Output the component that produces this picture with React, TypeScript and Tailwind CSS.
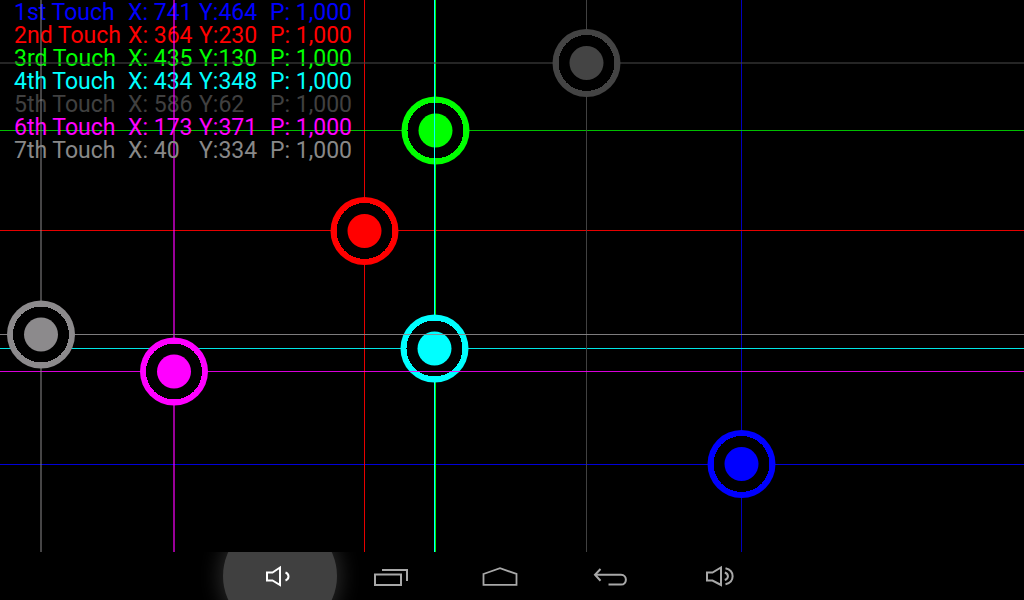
import type { ReactNode } from 'react';

interface Touch {
  label: string;
  x: number;
  y: number;
  cx: number;
  cy: number;
  textColor: string;
  color: string;
  hAlpha: number;
  vAlpha: number;
  hWidth: number;
  vWidth: number;
  layer: string;
}

const touches: Touch[] = [
  { label: '1st Touch', x: 741, y: 464, cx: 741.5, cy: 464, textColor: 'text-[#0000ff]', color: '#0000ff', hAlpha: 0.85, vAlpha: 0.75, hWidth: 1, vWidth: 1, layer: 'z-1' },
  { label: '2nd Touch', x: 364, y: 230, cx: 364.5, cy: 231, textColor: 'text-[#ff0000]', color: '#ff0000', hAlpha: 0.9, vAlpha: 0.9, hWidth: 1, vWidth: 1, layer: 'z-2' },
  { label: '3rd Touch', x: 435, y: 130, cx: 435.5, cy: 130.5, textColor: 'text-[#00ff00]', color: '#00ff00', hAlpha: 0.75, vAlpha: 0.95, hWidth: 1, vWidth: 1, layer: 'z-3' },
  { label: '4th Touch', x: 434, y: 348, cx: 434.5, cy: 348.5, textColor: 'text-[#00ffff]', color: '#00ffff', hAlpha: 0.9, vAlpha: 1, hWidth: 1, vWidth: 1, layer: 'z-4' },
  { label: '5th Touch', x: 586, y: 62, cx: 586.5, cy: 63, textColor: 'text-[#404040]', color: '#444444', hAlpha: 0.55, vAlpha: 0.95, hWidth: 2, vWidth: 1, layer: 'z-5' },
  { label: '6th Touch', x: 173, y: 371, cx: 174, cy: 371.5, textColor: 'text-[#ff00ff]', color: '#ff00ff', hAlpha: 0.85, vAlpha: 0.6, hWidth: 1, vWidth: 2, layer: 'z-6' },
  { label: '7th Touch', x: 40, y: 334, cx: 41, cy: 334.5, textColor: 'text-[#888888]', color: '#8c8a8c', hAlpha: 0.9, vAlpha: 0.5, hWidth: 1, vWidth: 2, layer: 'z-7' },
];

function TouchRow({ touch }: { touch: Touch }) {
  return (
    <tr className={`relative ${touch.layer} ${touch.textColor}`}>
      <td className="w-[114px] p-0">{touch.label}</td>
      <td className="w-[71px] p-0">X: {touch.x}</td>
      <td className="w-[71px] p-0">Y:{touch.y}</td>
      <td className="p-0">P: 1,000</td>
    </tr>
  );
}

// Crosshair lines and ring for one finger
function TouchMarker({ touch }: { touch: Touch }) {
  const { x, y, cx, cy, color, hAlpha, vAlpha, hWidth, vWidth, layer } = touch;
  return (
    <svg className={`pointer-events-none absolute inset-0 h-full w-full ${layer}`} aria-hidden="true">
      <rect x={x} y="0" width={vWidth} height="100%" fill={color} fillOpacity={vAlpha} />
      <rect x="0" y={y} width="100%" height={hWidth} fill={color} fillOpacity={hAlpha} />
      <circle cx={cx} cy={cy} r="34" fill={color} />
      <circle cx={cx} cy={cy} r="28" fill="#000000" shapeRendering="crispEdges" />
      <circle cx={cx} cy={cy} r="17" fill={color} />
    </svg>
  );
}

function NavButton({ label, children }: { label: string; children: ReactNode }) {
  return (
    <button type="button" aria-label={label} className="flex h-12 w-[110px] items-center justify-center text-[#a8a8a8]">
      {children}
    </button>
  );
}

export default function App() {
  return (
    <div className="flex min-h-screen flex-col overflow-hidden bg-black font-[Roboto,sans-serif]">
      <main className="relative isolate flex-1 overflow-hidden">
        <table className="ml-3.5 mt-px border-collapse text-[23px] leading-[23px] whitespace-nowrap">
          <tbody>
            {touches.map((touch) => (
              <TouchRow key={touch.label} touch={touch} />
            ))}
          </tbody>
        </table>
        {touches.map((touch) => (
          <TouchMarker key={touch.label} touch={touch} />
        ))}
      </main>

      <nav className="flex h-12 justify-center overflow-hidden pr-6">
        <button type="button" aria-label="Volume down" className="relative flex h-12 w-[110px] items-center justify-center text-white">
          <span className="absolute -inset-x-0.5 -inset-y-[33px] rounded-full bg-[#404040] shadow-[0_0_20px_4px_#282828]" />
          <svg className="relative" width="32" height="32" viewBox="0 0 32 32" fill="none" stroke="currentColor" strokeWidth="2">
            <path d="M3 12.5H8.5L16 7.5V25L8.5 20.5H3Z" />
            <path d="M21.5 12.5C25.5 14 25.5 19 21.5 20.5" />
          </svg>
        </button>
        <NavButton label="Recent apps">
          <svg width="36" height="32" viewBox="0 0 36 32" fill="none" stroke="currentColor" strokeWidth="2">
            <path d="M3 14.5H29V25H3Z" />
            <path d="M10 10H35V21" />
          </svg>
        </NavButton>
        <NavButton label="Home">
          <svg width="36" height="32" viewBox="0 0 36 32" fill="none" stroke="currentColor" strokeWidth="1.8">
            <path d="M1.5 14L18 8.2L34.5 14V24.8H1.5Z" />
          </svg>
        </NavButton>
        <NavButton label="Back">
          <svg width="36" height="32" viewBox="0 0 36 32" fill="none" stroke="currentColor" strokeWidth="2">
            <path d="M8.5 9L3 14.8L8.5 20.8" />
            <path d="M3 14.8H29C35.5 14.8 35.5 24.6 29 24.6H16.5" />
          </svg>
        </NavButton>
        <NavButton label="Volume up">
          <svg width="32" height="32" viewBox="0 0 32 32" fill="none" stroke="currentColor" strokeWidth="2">
            <path d="M3 12.5H8.5L17 7.5V25L8.5 20.5H3Z" />
            <path d="M20.8 12.5C25 14 25 18.5 20.8 20" />
            <path d="M21.5 8.2C31 10.5 31 22 21.5 24.3" />
          </svg>
        </NavButton>
      </nav>
    </div>
  );
}
